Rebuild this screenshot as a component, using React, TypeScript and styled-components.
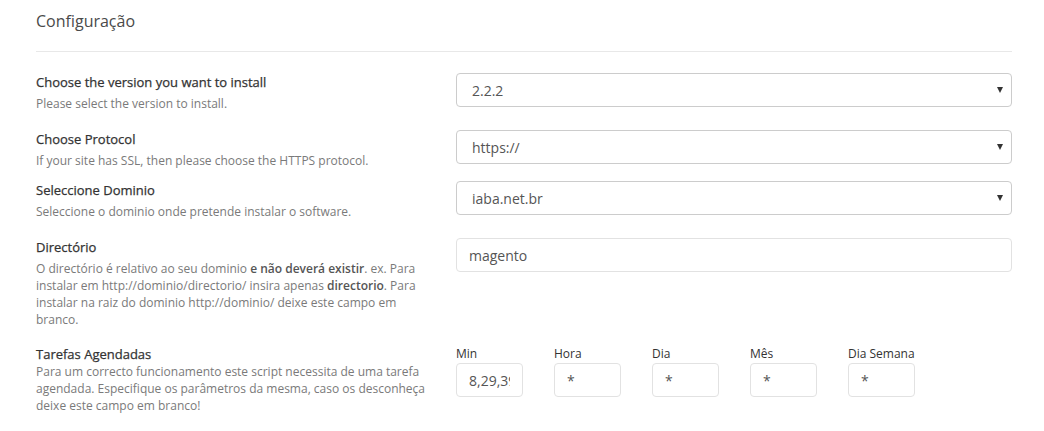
import React from "react";
import styled, { createGlobalStyle } from "styled-components";

const Global = createGlobalStyle`
  html, body { margin: 0; padding: 0; background: #fff; }
  body { font-family: "Open Sans", "Noto Sans", sans-serif; color: #555; }
  * { box-sizing: border-box; }
`;

const Page = styled.div`
  width: 976px;
  margin-left: 36px;
`;

const Header = styled.div`
  padding-top: 9px;
  padding-bottom: 18px;
  border-bottom: 1px solid #e8e8e8;
`;

const Title = styled.h3`
  margin: 0;
  font-size: 16px;
  line-height: 24px;
  font-weight: 400;
  color: #4a4a4a;
`;

const Form = styled.div`
  padding-top: 3px;
`;

const Row = styled.div<{ $top: number }>`
  display: grid;
  grid-template-columns: 404px 556px;
  column-gap: 16px;
  align-items: start;
  margin-top: ${(p) => p.$top}px;
`;

const Side = styled.div``;

const Label = styled.div`
  font-size: 13px;
  line-height: 18px;
  font-weight: 400;
  color: #333;
  -webkit-text-stroke: 0.25px #333;
`;

const Help = styled.div<{ $gap: number }>`
  margin-top: ${(p) => p.$gap}px;
  font-size: 12px;
  line-height: 17px;
  color: #7a7a7a;
  b { font-weight: 600; color: #555; }
`;

const SelectWrap = styled.div`
  position: relative;
`;

const Select = styled.select`
  appearance: none;
  -webkit-appearance: none;
  width: 100%;
  height: 34px;
  padding: 0 30px 0 15px;
  border: 1px solid #ccc;
  border-radius: 4px;
  background: #fff;
  font-family: inherit;
  font-size: 14px;
  color: #555;
  outline: none;
`;

const Caret = styled.span`
  position: absolute;
  right: 9px;
  top: 14px;
  width: 0;
  height: 0;
  border-left: 3.5px solid transparent;
  border-right: 3.5px solid transparent;
  border-top: 6px solid #333;
  pointer-events: none;
`;

const TextInput = styled.input<{ $width?: number }>`
  width: ${(p) => (p.$width ? `${p.$width}px` : "100%")};
  height: 34px;
  padding: 0 12px;
  border: 1px solid #e2e2e2;
  border-radius: 4px;
  background: #fff;
  font-family: inherit;
  font-size: 14px;
  color: #555;
  outline: none;
`;

const CronGrid = styled.div`
  display: flex;
  gap: 31px;
`;

const CronField = styled.label`
  display: flex;
  flex-direction: column;
  width: 67px;
`;

const CronName = styled.span`
  font-size: 12px;
  line-height: 18px;
  color: #333;
  white-space: nowrap;
`;

type Opt = { value: string };

const Dropdown: React.FC<Opt> = ({ value }) => (
  <SelectWrap>
    <Select defaultValue={value}>
      <option value={value}>{value}</option>
    </Select>
    <Caret />
  </SelectWrap>
);

const cron = [
  { name: "Min", value: "8,29,39" },
  { name: "Hora", value: "*" },
  { name: "Dia", value: "*" },
  { name: "Mês", value: "*" },
  { name: "Dia Semana", value: "*" },
];

export default function App() {
  return (
    <>
      <Global />
      <Page>
        <Header>
          <Title>Configuração</Title>
        </Header>
        <Form>
          <Row $top={18}>
            <Side>
              <Label>Choose the version you want to install</Label>
              <Help $gap={4}>Please select the version to install.</Help>
            </Side>
            <Dropdown value="2.2.2" />
          </Row>
          <Row $top={18}>
            <Side>
              <Label>Choose Protocol</Label>
              <Help $gap={4}>If your site has SSL, then please choose the HTTPS protocol.</Help>
            </Side>
            <Dropdown value="https://" />
          </Row>
          <Row $top={12}>
            <Side>
              <Label>Seleccione Dominio</Label>
              <Help $gap={4}>Seleccione o dominio onde pretende instalar o software.</Help>
            </Side>
            <Dropdown value="iaba.net.br" />
          </Row>
          <Row $top={18}>
            <Side>
              <Label>Directório</Label>
              <Help $gap={4}>
                O directório é relativo ao seu dominio <b>e não deverá existir</b>. ex. Para
                instalar em http://dominio/directorio/ insira apenas <b>directorio</b>. Para
                instalar na raiz do dominio http://dominio/ deixe este campo em branco.
              </Help>
            </Side>
            <TextInput defaultValue="magento" />
          </Row>
          <Row $top={17}>
            <Side>
              <Label>Tarefas Agendadas</Label>
              <Help $gap={0}>
                Para um correcto funcionamento este script necessita de uma tarefa
                agendada. Especifique os parâmetros da mesma, caso os desconheça
                deixe este campo em branco!
              </Help>
            </Side>
            <CronGrid>
              {cron.map((c) => (
                <CronField key={c.name}>
                  <CronName>{c.name}</CronName>
                  <TextInput defaultValue={c.value} />
                </CronField>
              ))}
            </CronGrid>
          </Row>
        </Form>
      </Page>
    </>
  );
}
